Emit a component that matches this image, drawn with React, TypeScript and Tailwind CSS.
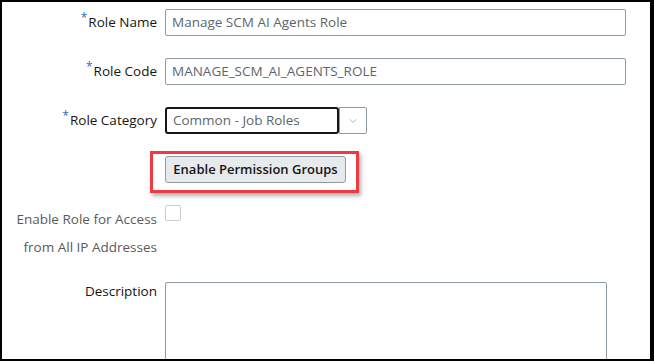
import { ChevronDown } from 'lucide-react'

function Required({ children }: { children: React.ReactNode }) {
  return (
    <span className="text-[#161513]">
      <sup className="text-[#2f6db5] text-[12px] top-[-5px] mr-[1px]">*</sup>
      {children}
    </span>
  )
}

function TextInput({ value }: { value: string }) {
  return (
    <div className="h-[27px] w-[461px] flex items-center px-[6px] border border-[#8d9ba5] rounded-[2px] text-[#5d666c] bg-white">
      {value}
    </div>
  )
}

export default function App() {
  return (
    <div
      className="w-[654px] h-[361px] overflow-hidden bg-white border-t-2 border-l-2 border-r-4 border-b-2 border-black text-[13.5px]"
      style={{ fontFamily: '"Open Sans", "Noto Sans", sans-serif' }}
    >
      <div className="grid grid-cols-[155px_1fr] gap-x-2 gap-y-[22px] pt-[7px]">
        <div className="flex items-center justify-end">
          <Required>Role Name</Required>
        </div>
        <TextInput value="Manage SCM AI Agents Role" />

        <div className="flex items-center justify-end">
          <Required>Role Code</Required>
        </div>
        <TextInput value="MANAGE_SCM_AI_AGENTS_ROLE" />

        <div className="flex items-center justify-end">
          <Required>Role Category</Required>
        </div>
        <div className="flex items-center">
          <div className="h-[27px] w-[174px] flex items-center px-[6px] border-2 border-[#161513] rounded-[3px] text-[#5d666c]">
            Common - Job Roles
          </div>
          <div className="h-[27px] w-[28px] flex items-center justify-center border border-[#8d9ba5] rounded-r-[2px]">
            <ChevronDown className="w-[12px] h-[12px] text-[#8d9ba5]" strokeWidth={1.5} />
          </div>
        </div>

        <div />
        <div className="flex">
          <div className="relative">
            <span className="absolute left-[-15px] right-[-13px] top-[-5px] bottom-[-10px] border-[3px] border-[#ee3a45] shadow-[2px_3px_4px_rgba(0,0,0,0.3)]" />
            <button className="h-[27px] w-[181px] border border-[#8d9ba5] rounded-[3px] bg-[#e6eaed] font-semibold text-[13px] text-[#161513]">
              Enable Permission Groups
            </button>
          </div>
        </div>

        <div className="flex flex-col items-end text-[#5a5a5a] leading-[28px]">
          <span>Enable Role for Access</span>
          <span>from All IP Addresses</span>
        </div>
        <div>
          <div className="w-[16px] h-[16px] border border-[#c9cdd0] rounded-[2px] bg-white" />
        </div>

        <div className="flex justify-end -mt-[2px] leading-[20px] text-[#161513]">
          Description
        </div>
        <div className="w-[442px] h-[90px] -mt-[1px] border border-[#8d9ba5] rounded-[2px]" />
      </div>
    </div>
  )
}
